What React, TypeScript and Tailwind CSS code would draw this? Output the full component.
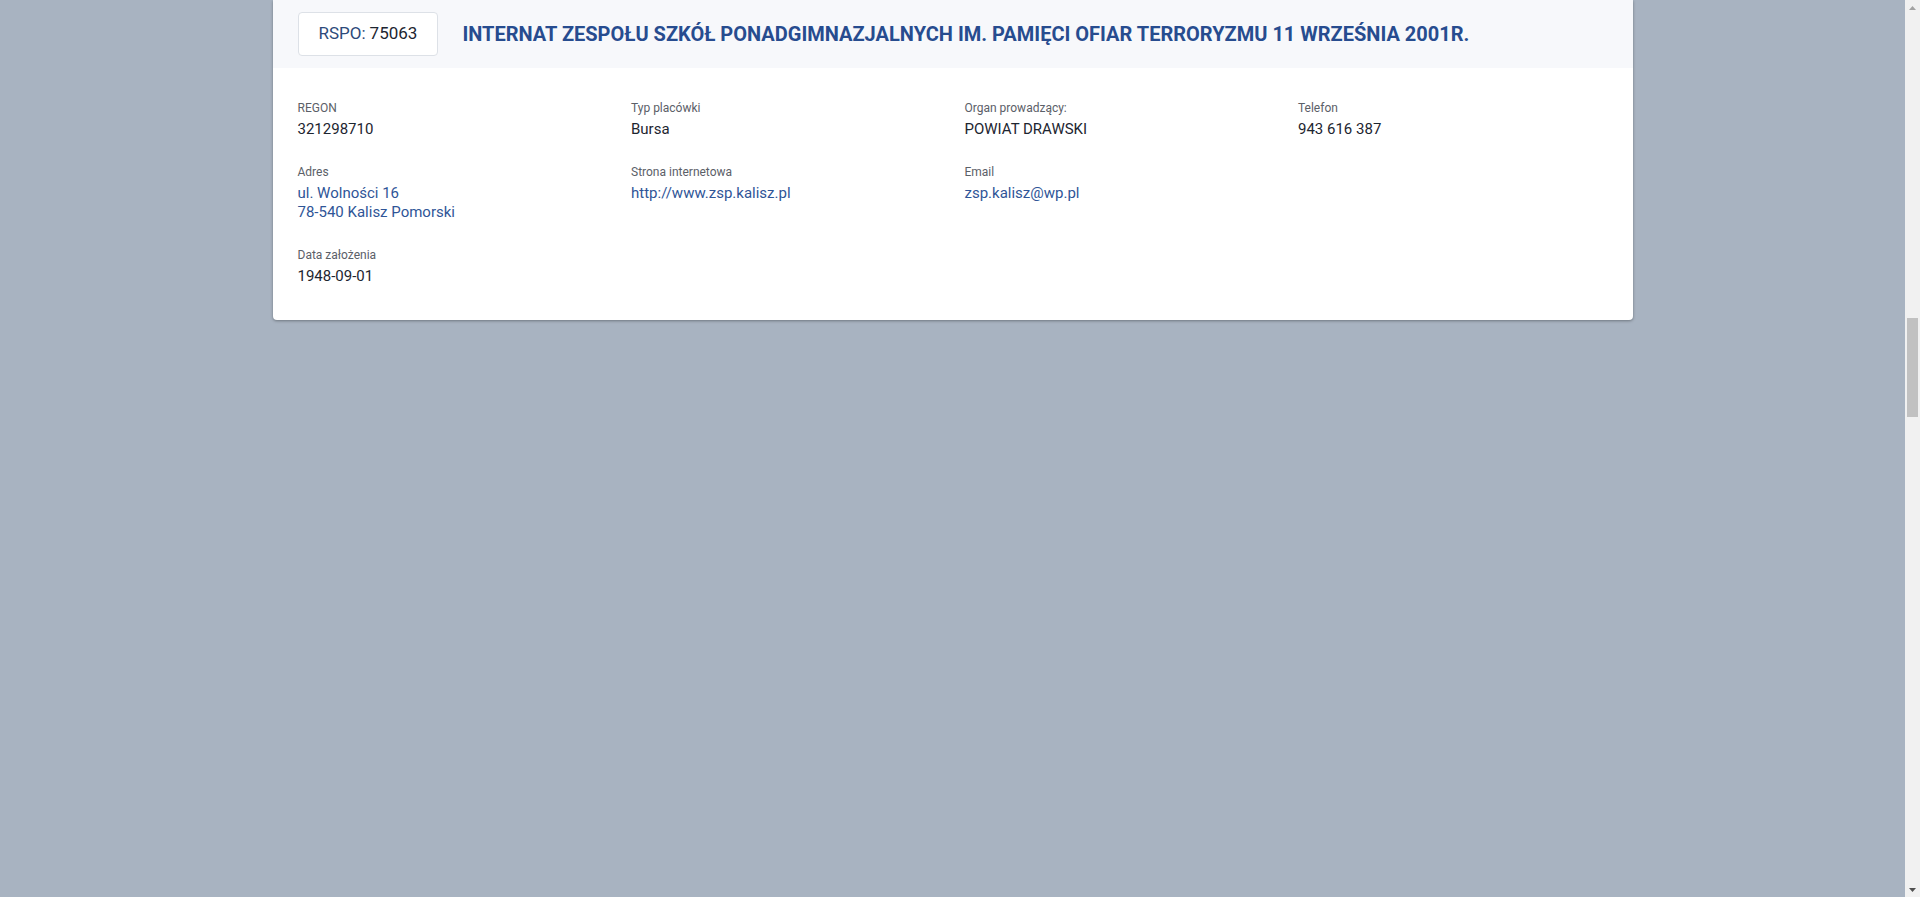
type Field = {
  label: string;
  lines: string[];
  link?: boolean;
};

const COLUMNS: Field[][] = [
  [
    { label: "REGON", lines: ["321298710"] },
    { label: "Adres", lines: ["ul. Wolności 16", "78-540 Kalisz Pomorski"], link: true },
    { label: "Data założenia", lines: ["1948-09-01"] },
  ],
  [
    { label: "Typ placówki", lines: ["Bursa"] },
    { label: "Strona internetowa", lines: ["http://www.zsp.kalisz.pl"], link: true },
  ],
  [
    { label: "Organ prowadzący:", lines: ["POWIAT DRAWSKI"] },
    { label: "Email", lines: ["zsp.kalisz@wp.pl"], link: true },
  ],
  [{ label: "Telefon", lines: ["943 616 387"] }],
];

function InfoField({ field }: { field: Field }) {
  return (
    <div>
      <p className="text-xs leading-4 text-[#5b6068] mb-1">{field.label}</p>
      {field.lines.map((line) =>
        field.link ? (
          <a key={line} href="#" className="block text-[15px] leading-[19px] text-[#2f5597]">
            {line}
          </a>
        ) : (
          <p key={line} className="text-[15px] leading-[19px] text-[#1d2530]">
            {line}
          </p>
        )
      )}
    </div>
  );
}

// classic window scrollbar, page scrolled down to this result
function Scrollbar() {
  return (
    <div aria-hidden="true" className="w-[15px] shrink-0 flex flex-col bg-[#f1f1f1]">
      <div className="h-[15px] flex items-center justify-center">
        <svg width="7" height="4" viewBox="0 0 7 4">
          <path d="M3.5 0L7 4H0z" fill="#a3a3a3" />
        </svg>
      </div>
      <div className="h-[303px]" />
      <div className="h-[99px] mx-[2px] bg-[#c1c1c1]" />
      <div className="flex-1" />
      <div className="h-[15px] flex items-center justify-center">
        <svg width="7" height="4" viewBox="0 0 7 4">
          <path d="M0 0H7L3.5 4z" fill="#505050" />
        </svg>
      </div>
    </div>
  );
}

export default function App() {
  return (
    <div className="h-screen flex overflow-hidden bg-[#a8b3c1] font-['Roboto','Liberation_Sans',sans-serif]">
      <main className="flex-1 min-w-0 overflow-hidden">
        <div className="w-[1360px] mx-auto bg-white rounded-b shadow-[0_1px_3px_rgba(0,0,0,0.35)] overflow-hidden">
          {/* Header */}
          <div className="flex items-center gap-6 bg-[#f7f8fb] px-[25px] py-3">
            <div className="h-11 flex items-center px-5 rounded border border-[#dde1e7] bg-white text-[17px] whitespace-nowrap">
              <span className="text-[#2d4a7a]">RSPO:</span>
              <span className="ml-1 text-[#1d2530]">75063</span>
            </div>
            <h2 className="text-[20px] leading-7 font-bold text-[#274c8f]">
              INTERNAT ZESPOŁU SZKÓŁ PONADGIMNAZJALNYCH IM. PAMIĘCI OFIAR TERRORYZMU 11 WRZEŚNIA 2001R.
            </h2>
          </div>

          {/* Details */}
          <div className="grid grid-cols-4 gap-x-6 px-[25px] pt-8 pb-[34px]">
            {COLUMNS.map((col, i) => (
              <div key={i} className="flex flex-col gap-[25px]">
                {col.map((field) => (
                  <InfoField key={field.label} field={field} />
                ))}
              </div>
            ))}
          </div>
        </div>
      </main>
      <Scrollbar />
    </div>
  );
}
